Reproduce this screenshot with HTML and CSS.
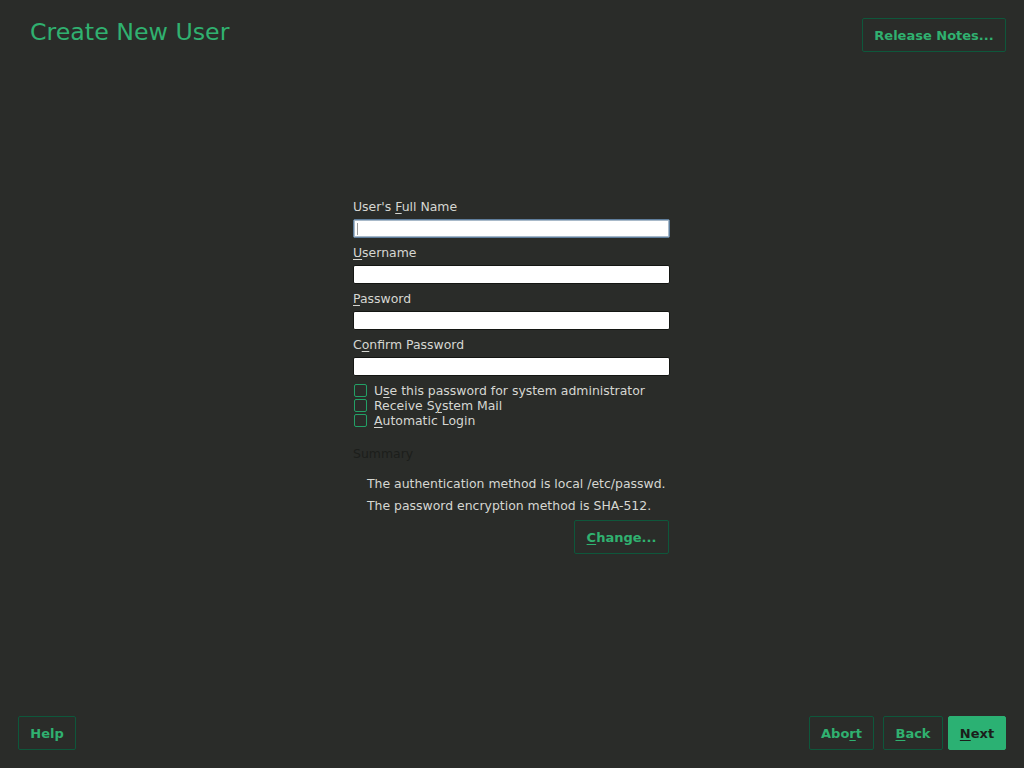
FILE: index.html
```html
<!DOCTYPE html>
<html>
<head>
<meta charset="utf-8">
<link rel="stylesheet" href="styles.css">
</head>
<body>
<div class="page">
  <header class="header">
    <h1 class="title">Create New User</h1>
    <button class="btn release">Release Notes...</button>
  </header>
  <main class="main">
    <form class="form">
      <label class="label">User's <u>F</u>ull Name</label>
      <div class="input focused"><span class="caret"></span></div>
      <label class="label"><u>U</u>sername</label>
      <div class="input"></div>
      <label class="label"><u>P</u>assword</label>
      <div class="input"></div>
      <label class="label">C<u>o</u>nfirm Password</label>
      <div class="input"></div>
      <div class="checks">
        <div class="check"><span class="box"></span><span>U<u>s</u>e this password for system administrator</span></div>
        <div class="check"><span class="box"></span><span>Receive S<u>y</u>stem Mail</span></div>
        <div class="check"><span class="box"></span><span><u>A</u>utomatic Login</span></div>
      </div>
      <div class="summary-title">Summary</div>
      <div class="summary">
        <p>The authentication method is local /etc/passwd.</p>
        <p>The password encryption method is SHA-512.</p>
      </div>
      <div class="change-row"><button type="button" class="btn change"><u>C</u>hange...</button></div>
    </form>
  </main>
  <footer class="footer">
    <button class="btn help">Help</button>
    <div class="nav">
      <button class="btn abort">Abo<u>r</u>t</button>
      <button class="btn back"><u>B</u>ack</button>
      <button class="btn next"><u>N</u>ext</button>
    </div>
  </footer>
</div>
</body>
</html>
```
FILE: styles.css
```css
html, body {
  margin: 0;
  padding: 0;
  background: #2a2c29;
}
body {
  font-family: "DejaVu Sans", sans-serif;
  color: #d6d7d2;
}
.page {
  width: 1024px;
  height: 768px;
  display: flex;
  flex-direction: column;
}
.header {
  display: flex;
  justify-content: space-between;
  align-items: flex-start;
  padding: 18px 18px 0 30px;
}
.title {
  margin: 0;
  margin-top: -1px;
  font-size: 23.7px;
  font-weight: normal;
  color: #30b170;
  line-height: 30px;
}
.btn {
  font-family: "DejaVu Sans", sans-serif;
  font-weight: bold;
  font-size: 13px;
  color: #30b170;
  background: transparent;
  border: 1px solid #0e573b;
  border-radius: 2px;
  height: 34px;
  padding: 0;
  cursor: default;
}
.btn u { text-decoration-thickness: 1px; text-underline-offset: 2px; }
.release { width: 144px; }
.main {
  flex: 1;
  display: flex;
  justify-content: center;
}
.form {
  width: 317px;
  margin-top: 147px;
  margin-right: 1px;
  display: flex;
  flex-direction: column;
  font-size: 12.45px;
}
.label {
  display: block;
  height: 16px;
  line-height: 16px;
  margin-bottom: 4px;
  color: #d6d7d2;
}
.label u, .check u { text-underline-offset: 2px; }
.input {
  height: 17px;
  background: #fff;
  border: 1px solid #141613;
  border-radius: 2px;
  margin-bottom: 7px;
  position: relative;
}
.input.focused {
  border-color: #5f7e9c;
  box-shadow: inset 0 0 0 1px #a8b9c9;
}
.caret {
  position: absolute;
  left: 3px;
  top: 3px;
  width: 1px;
  height: 12px;
  background: #9a9a9a;
}
.checks {
  margin-top: 0;
  display: flex;
  flex-direction: column;
}
.check {
  display: flex;
  align-items: center;
  height: 15px;
  line-height: 15px;
  color: #d6d7d2;
}
.box {
  width: 11px;
  height: 11px;
  border: 1px solid #23a066;
  border-radius: 2px;
  margin: 0 7px 0 1px;
  flex: none;
}
.summary-title {
  margin-top: 18px;
  height: 16px;
  line-height: 16px;
  color: #1c1e1b;
}
.summary {
  padding-left: 14px;
  margin-top: 11px;
}
.summary p {
  margin: 0;
  height: 22px;
  line-height: 22px;
  white-space: nowrap;
  color: #d6d7d2;
}
.change-row {
  display: flex;
  justify-content: flex-end;
  margin-top: 3px;
  padding-right: 1px;
}
.change {
  width: 95px;
}
.footer {
  display: flex;
  justify-content: space-between;
  align-items: flex-end;
  padding: 0 18px 18px 18px;
}
.help { width: 58px; }
.nav { display: flex; }
.abort { width: 65px; margin-right: 9px; }
.back { width: 60px; margin-right: 5px; }
.next {
  width: 58px;
  background: #2bb173;
  border-color: #2bb173;
  color: #1b1e1b;
}
```
